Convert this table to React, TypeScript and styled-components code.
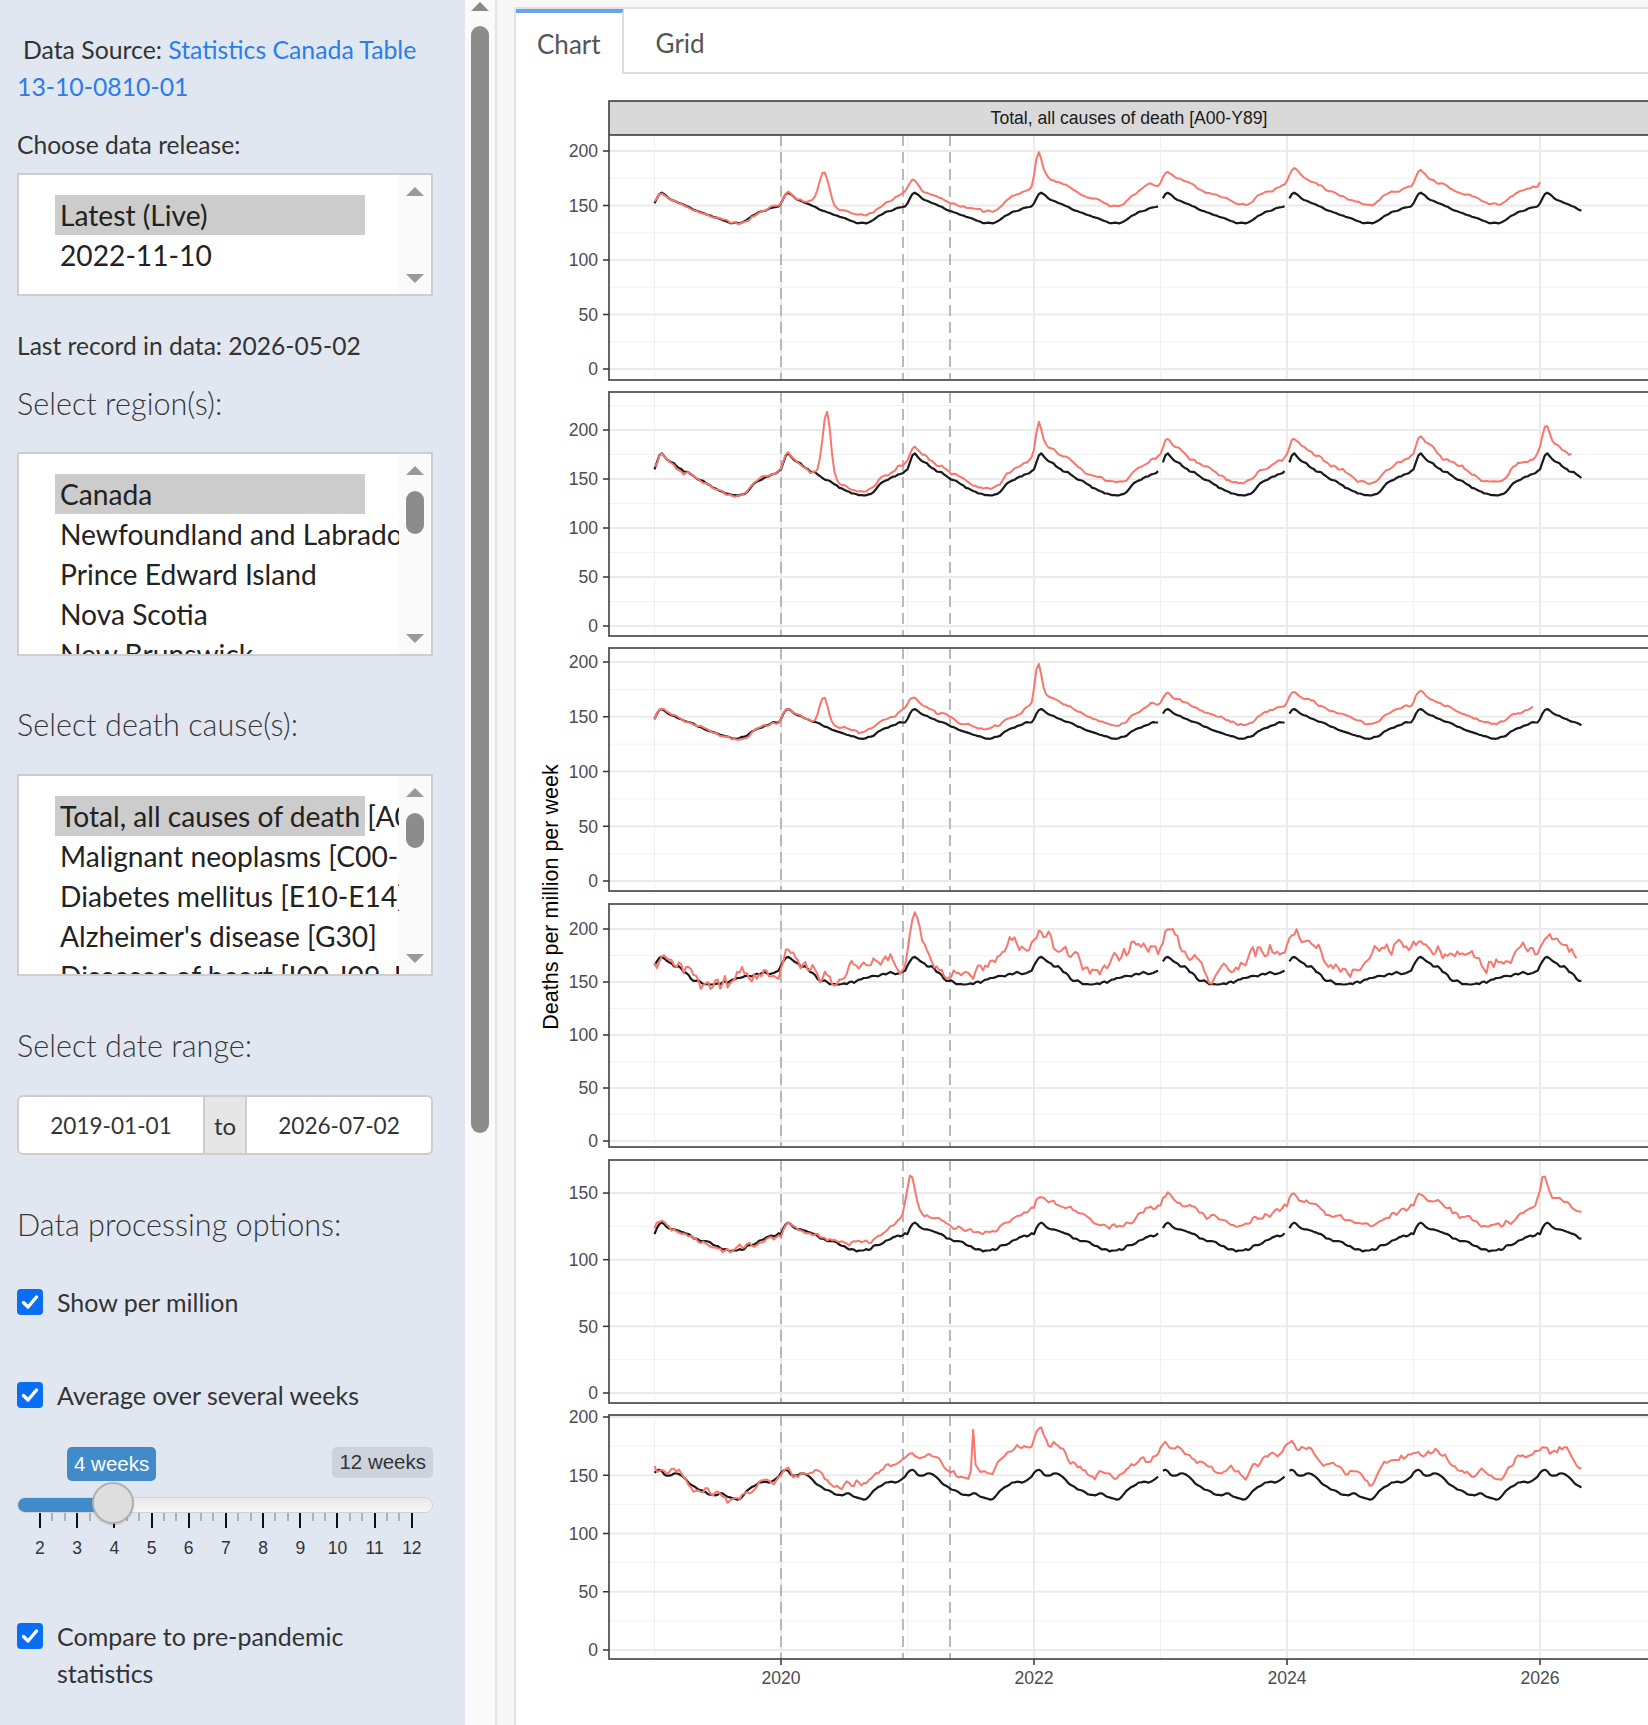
import React from 'react'
import styled, { createGlobalStyle } from 'styled-components'

const GlobalStyle = createGlobalStyle`
  html, body {
    margin: 0;
    padding: 0;
    overflow: hidden;
  }
  body {
    font-family: Lato, 'Noto Sans', sans-serif;
    color: #333;
    background: #f6f6f6;
  }
  * {
    box-sizing: border-box;
  }
`

/* ---------- layout ---------- */

const Page = styled.div`
  display: flex;
  width: 1700px;
  height: 1725px;
`

const Sidebar = styled.aside`
  flex: none;
  width: 465px;
  height: 1725px;
  padding: 31px 32px 0 17px;
  background: #e0e7f1;
  overflow: hidden;
`

const PageScroll = styled.div`
  flex: none;
  width: 32px;
  display: flex;
  flex-direction: column;
  align-items: center;
  background: #fafafa;
  border-right: 2px solid #e4e4e4;
`

const PageScrollArrow = styled.div`
  width: 0;
  height: 0;
  margin-top: 2px;
  border-left: 9px solid transparent;
  border-right: 9px solid transparent;
  border-bottom: 9px solid #8a8a8a;
`

const PageScrollThumb = styled.div`
  width: 18px;
  height: 1107px;
  margin-top: 15px;
  border-radius: 9px;
  background: #8c8c8c;
`

const Main = styled.main`
  flex: 1;
  min-width: 0;
  padding: 7px 0 0 17px;
  background: #f6f6f6;
`

const TabCard = styled.section`
  height: 100%;
  background: #fff;
  border-top: 2px solid #e2e2e2;
  border-left: 2px solid #e2e2e2;
  overflow: hidden;
`

const TabBar = styled.nav`
  display: flex;
  height: 65px;
  border-bottom: 2px solid #dedede;
`

const Tab = styled.div<{ $active?: boolean }>`
  display: flex;
  align-items: center;
  margin-top: -2px;
  height: ${p => (p.$active ? 67 : 65)}px;
  padding: 0 ${p => (p.$active ? 21 : 0)}px 0 ${p => (p.$active ? 21 : 32)}px;
  border-top: 6px solid ${p => (p.$active ? '#6ba3e8' : 'transparent')};
  border-right: ${p => (p.$active ? '2px solid #dedede' : 'none')};
  background: ${p => (p.$active ? '#fff' : 'transparent')};
  font-size: 26px;
  color: #555;
`

/* ---------- sidebar text ---------- */

const Source = styled.div`
  font-size: 24.8px;
  line-height: 37px;
`

const SourceLine = styled.div<{ $indent?: boolean }>`
  padding-left: ${p => (p.$indent ? 6 : 0)}px;
  white-space: nowrap;
`

const SourceLink = styled.a`
  color: #2b7de9;
  text-decoration: none;
`

const Label = styled.div<{ $mt: number }>`
  margin-top: ${p => p.$mt}px;
  font-size: 24.6px;
  line-height: 37px;
`

const Heading = styled.div<{ $mt: number }>`
  margin-top: ${p => p.$mt}px;
  font-size: 30.6px;
  font-weight: 300;
  line-height: 40px;
  color: #383838;
`

/* ---------- list boxes ---------- */

const ListBox = styled.div<{ $mt: number; $h: number }>`
  display: flex;
  height: ${p => p.$h}px;
  margin-top: ${p => p.$mt}px;
  border: 2px solid #cdcdcd;
  background: #fff;
`

const ListBody = styled.div`
  flex: 1;
  min-width: 0;
  overflow: hidden;
  padding: 20px 0 0 36px;
`

const Option = styled.div<{ $selected?: boolean }>`
  width: 310px;
  padding-left: 5px;
  font-size: 28.2px;
  line-height: 40px;
  white-space: nowrap;
  color: #222;
  background: ${p => (p.$selected ? '#cccccc' : 'transparent')};
`

const ListScroll = styled.div`
  flex: none;
  width: 32px;
  display: flex;
  flex-direction: column;
  align-items: center;
  background: #fafafa;
`

const Arrow = styled.div<{ $down?: boolean }>`
  width: 0;
  height: 0;
  margin: ${p => (p.$down ? '0 0 11px' : '12px 0 0')};
  border-left: 9px solid transparent;
  border-right: 9px solid transparent;
  ${p => (p.$down ? 'border-top' : 'border-bottom')}: 9px solid #999;
`

const ListThumb = styled.div<{ $h: number }>`
  width: 18px;
  height: ${p => p.$h}px;
  margin-top: 16px;
  border-radius: 9px;
  background: #8c8c8c;
`

const Spacer = styled.div`
  flex: 1;
`

/* ---------- date range ---------- */

const DateGroup = styled.div`
  display: flex;
  height: 60px;
  margin-top: 29px;
  border: 2px solid #cdcdcd;
  border-radius: 6px;
  overflow: hidden;
  background: #fff;
`

const DateField = styled.div`
  flex: 1;
  display: flex;
  align-items: center;
  justify-content: center;
  font-size: 22.6px;
  color: #333;
`

const DateAddon = styled.div`
  flex: none;
  width: 44px;
  display: flex;
  align-items: center;
  justify-content: center;
  background: #e6e6e6;
  border-left: 2px solid #cdcdcd;
  border-right: 2px solid #cdcdcd;
  font-size: 24px;
  color: #333;
`

/* ---------- checkboxes ---------- */

const CheckRow = styled.label<{ $mt: number }>`
  display: flex;
  align-items: flex-start;
  gap: 14px;
  margin-top: ${p => p.$mt}px;
  font-size: 25px;
  line-height: 37px;
`

const CheckBox = styled.span`
  flex: none;
  width: 26px;
  height: 26px;
  margin-top: 5px;
  border-radius: 4px;
  background: #0a6ef5;
  display: flex;
  align-items: center;
  justify-content: center;
`

const CheckText = styled.span`
  max-width: 330px;
`

/* ---------- slider ---------- */

const Slider = styled.div`
  position: relative;
  margin-top: 33px;
  font-family: 'Liberation Sans', Arial, sans-serif;
`

const BadgeRow = styled.div`
  position: relative;
  height: 34px;
`

const Badge = styled.span<{ $active?: boolean }>`
  position: absolute;
  top: 0;
  ${p => (p.$active ? 'left: 50px;' : 'right: 0;')}
  height: ${p => (p.$active ? 34 : 31)}px;
  padding: 0 7px;
  border-radius: 5px;
  font-size: 20.5px;
  line-height: ${p => (p.$active ? 34 : 30)}px;
  color: ${p => (p.$active ? '#fff' : '#333')};
  background: ${p => (p.$active ? '#428bca' : '#ccd3dc')};
`

const Track = styled.div`
  height: 16px;
  margin-top: 16px;
  border: 1px solid #d2d2d2;
  border-radius: 8px;
  background: linear-gradient(#e8e8e8, #f7f7f7);
  overflow: hidden;
`

const TrackFill = styled.div<{ $w: number }>`
  width: ${p => p.$w}px;
  height: 100%;
  background: #428bca;
`

const Handle = styled.div`
  position: absolute;
  left: 75px;
  top: 35px;
  width: 42px;
  height: 42px;
  border-radius: 50%;
  background: #dedede;
  border: 2px solid #b0b0b0;
  box-shadow: 0 1px 2px rgba(0, 0, 0, 0.15);
`

const TickRow = styled.div`
  display: flex;
  justify-content: space-between;
  align-items: flex-start;
  width: 374px;
  margin-left: 22px;
`

const Tick = styled.span<{ $major?: boolean }>`
  width: 2px;
  height: ${p => (p.$major ? 15 : 8)}px;
  background: ${p => (p.$major ? '#111' : '#b0b0b0')};
`

const TickLabels = styled.div`
  display: grid;
  grid-template-columns: repeat(11, 37.2px);
  margin: 10px 0 0 4.4px;
  font-size: 17.5px;
  line-height: 20px;
  color: #333;
  text-align: center;
`

/* ---------- chart ---------- */

const ChartSvg = styled.svg`
  display: block;
  font-family: 'Liberation Sans', Arial, sans-serif;
`

type Knot = [number, number]
type Bump = [number, number, number]

interface PanelSpec {
  top: number
  bottom: number
  zero: number
  ppu: number
  ticks: number[]
  level: number
  amp: number
  shape: Knot[]
  blackNoise: number
  redNoise: number
  base: Knot[]
  bumps: Bump[]
  redEnd: number
  seed: number
}

const interp = (knots: Knot[], x: number) => {
  if (x <= knots[0][0]) return knots[0][1]
  for (let i = 1; i < knots.length; i++) {
    if (x <= knots[i][0]) {
      const [x0, y0] = knots[i - 1]
      const [x1, y1] = knots[i]
      return y0 + ((y1 - y0) * (x - x0)) / (x1 - x0)
    }
  }
  return knots[knots.length - 1][1]
}

const makeRng = (seed: number) => () => {
  seed = (seed + 0x6d2b79f5) | 0
  let t = Math.imul(seed ^ (seed >>> 15), 1 | seed)
  t = (t + Math.imul(t ^ (t >>> 7), 61 | t)) ^ t
  return ((t ^ (t >>> 14)) >>> 0) / 4294967296
}

const smooth = (a: number[], w: number) =>
  a.map((_, i) => {
    let s = 0
    let c = 0
    for (let j = i - w + 1; j <= i; j++) {
      if (j >= 0) {
        s += a[j]
        c++
      }
    }
    return s / c
  })

// centered, wrapping average for one seasonal year
const smoothCycle = (a: number[], half: number) =>
  a.map((_, i) => {
    let s = 0
    for (let j = -half; j <= half; j++) s += a[(i + j + a.length) % a.length]
    return s / (2 * half + 1)
  })

const SHAPE: Knot[] = [
  [0, 0], [0.04, 0.09], [0.12, 0.04], [0.3, -0.02], [0.5, -0.08],
  [0.62, -0.11], [0.7, -0.105], [0.78, -0.06], [0.88, -0.025], [1, 0],
]

const SHAPE_LATE: Knot[] = [
  [0, 0], [0.04, 0.085], [0.1, 0.04], [0.2, 0.01], [0.3, -0.06], [0.4, -0.085],
  [0.5, -0.08], [0.6, -0.065], [0.75, -0.035], [0.9, -0.02], [1, 0],
]

const SHAPE_DOUBLE: Knot[] = [
  [0, 0], [0.03, 0.047], [0.1, -0.013], [0.18, 0.02], [0.3, -0.06], [0.45, -0.113],
  [0.5, -0.11], [0.55, -0.107], [0.65, -0.147], [0.8, -0.053], [0.95, -0.027], [1, 0],
]

const T200 = [0, 50, 100, 150, 200]

const PANELS: PanelSpec[] = [
  {
    top: 135, bottom: 380, zero: 369, ppu: 1.09, ticks: T200,
    level: 150, amp: 1, shape: SHAPE, blackNoise: 0.8, redNoise: 1.2, redEnd: 2026.0, seed: 11,
    base: [[2020.15, 0], [2020.45, 0.05], [2020.8, 0.06], [2021.3, 0.05], [2021.6, 0.08], [2022.1, 0.12], [2023.5, 0.13], [2026.5, 0.13]],
    bumps: [[2020.34, 0.055, 0.22], [2021.0, 0.07, 0.04], [2022.03, 0.035, 0.13], [2022.9, 0.07, 0.03]],
  },
  {
    top: 392, bottom: 636, zero: 626, ppu: 0.98, ticks: T200,
    level: 158, amp: 1.5, shape: SHAPE, blackNoise: 1.5, redNoise: 2, redEnd: 2026.25, seed: 23,
    base: [[2020.2, 0], [2020.5, 0.04], [2021.0, 0.03], [2021.5, 0.05], [2022.1, 0.09], [2026.5, 0.1]],
    bumps: [[2020.36, 0.045, 0.45], [2020.95, 0.07, 0.03], [2022.03, 0.03, 0.12], [2026.03, 0.045, 0.06]],
  },
  {
    top: 648, bottom: 891, zero: 881, ppu: 1.095, ticks: T200,
    level: 146, amp: 1, shape: SHAPE, blackNoise: 1, redNoise: 1.5, redEnd: 2025.95, seed: 37,
    base: [[2020.2, 0], [2020.5, 0.05], [2021.0, 0.05], [2021.5, 0.05], [2022.1, 0.1], [2026.5, 0.1]],
    bumps: [[2020.34, 0.045, 0.18], [2021.0, 0.07, 0.04], [2022.03, 0.035, 0.18], [2022.92, 0.07, 0.03]],
  },
  {
    top: 904, bottom: 1147, zero: 1141, ppu: 1.06, ticks: T200,
    level: 162, amp: 1, shape: SHAPE_LATE, blackNoise: 2.2, redNoise: 9, redEnd: 2026.3, seed: 41,
    base: [[2020.1, 0], [2020.4, 0.03], [2020.9, 0.08], [2021.5, 0.07], [2022.0, 0.12], [2026.5, 0.11]],
    bumps: [[2020.05, 0.03, 0.04], [2021.05, 0.05, 0.14], [2021.8, 0.05, 0.1], [2022.12, 0.04, 0.08], [2022.93, 0.05, 0.06]],
  },
  {
    top: 1160, bottom: 1403, zero: 1393, ppu: 1.333, ticks: [0, 50, 100, 150],
    level: 119, amp: 0.95, shape: SHAPE, blackNoise: 1.5, redNoise: 2.2, redEnd: 2026.33, seed: 53,
    base: [[2020.2, 0], [2020.5, 0.04], [2020.8, 0.08], [2021.3, 0.09], [2022.0, 0.17], [2026.5, 0.17]],
    bumps: [[2021.02, 0.045, 0.22], [2026.02, 0.035, 0.14]],
  },
  {
    top: 1415, bottom: 1659, zero: 1650, ppu: 1.165, ticks: T200,
    level: 150, amp: 1, shape: SHAPE_DOUBLE, blackNoise: 1.2, redNoise: 4, redEnd: 2026.33, seed: 67,
    base: [[2020.15, 0], [2020.35, 0.06], [2020.9, 0.12], [2021.3, 0.1], [2021.9, 0.2], [2022.5, 0.14], [2026.5, 0.13]],
    bumps: [[2020.3, 0.04, 0.05], [2021.52, 0.012, 0.25], [2022.05, 0.05, 0.06]],
  },
]

const STEP = 1 / 52
const WEEKS = Math.round((2026.33 - 2019) / STEP)
const PLOT_LEFT = 609
const PLOT_RIGHT = 1662
const xAt = (t: number) => 781 + (t - 2020) * 126.5

const toPath = (pts: Knot[], spec: PanelSpec) =>
  pts
    .map((p, i) => `${i ? 'L' : 'M'}${xAt(p[0]).toFixed(1)},${(spec.zero - p[1] * spec.ppu).toFixed(1)}`)
    .join('')

const buildSeries = (spec: PanelSpec) => {
  const rand = makeRng(spec.seed)
  const white = (n: number) => Array.from({ length: n }, () => rand() * 2 - 1)
  const bn = smooth(white(52), 2)
  const slow = smooth(white(WEEKS + 1), 6)
  const fast = smooth(white(WEEKS + 1), 2)
  const season = smoothCycle(
    Array.from({ length: 52 }, (_, w) => spec.level * (1 + spec.amp * interp(spec.shape, w / 52))),
    1,
  )
  const black: Knot[][] = [[], [], []]
  const red: Knot[] = []
  for (let k = 0; k <= WEEKS; k++) {
    const t = 2019 + k * STEP
    const woy = k % 52
    const b = season[woy] + bn[woy] * spec.blackNoise
    if (k < 208) black[0].push([t, b])
    else if (k > 208 && k < 260) black[1].push([t, b])
    else if (k > 260) black[2].push([t, b])
    if (t <= spec.redEnd) {
      const ex = interp(spec.base, t) + spec.bumps.reduce((s, [c, w, h]) => s + h * Math.exp(-(((t - c) / w) ** 2)), 0)
      red.push([t, b * (1 + ex) + slow[k] * spec.redNoise * 2.5 + fast[k] * spec.redNoise * 0.6])
    }
  }
  return {
    black: black.map(seg => toPath(seg, spec)),
    red: toPath(red, spec),
  }
}

const SERIES = PANELS.map(buildSeries)
const MAJOR_YEARS = [2020, 2022, 2024, 2026]
const MINOR_YEARS = [2019, 2021, 2023, 2025]
const DASHED = [781, 903, 950]

const Panel = ({ spec, index }: { spec: PanelSpec; index: number }) => {
  const inside = (v: number) => {
    const y = spec.zero - v * spec.ppu
    return y > spec.top + 1 && y < spec.bottom - 1
  }
  const minor = [25, 75, 125, 175, 225].filter(inside)
  const major = spec.ticks.filter(inside)
  const h = spec.bottom - spec.top
  const series = SERIES[index]
  return (
    <g>
      <rect x={PLOT_LEFT} y={spec.top} width={PLOT_RIGHT - PLOT_LEFT} height={h} fill="#fff" />
      {minor.map(v => (
        <line key={`n${v}`} x1={PLOT_LEFT} x2={PLOT_RIGHT} y1={spec.zero - v * spec.ppu} y2={spec.zero - v * spec.ppu} stroke="#f2f2f2" strokeWidth={1} />
      ))}
      {MINOR_YEARS.map(y => (
        <line key={`vy${y}`} x1={xAt(y)} x2={xAt(y)} y1={spec.top} y2={spec.bottom} stroke="#f0f0f0" strokeWidth={1} />
      ))}
      {major.map(v => (
        <line key={`m${v}`} x1={PLOT_LEFT} x2={PLOT_RIGHT} y1={spec.zero - v * spec.ppu} y2={spec.zero - v * spec.ppu} stroke="#ebebeb" strokeWidth={2} />
      ))}
      {MAJOR_YEARS.map(y => (
        <line key={`vm${y}`} x1={xAt(y)} x2={xAt(y)} y1={spec.top} y2={spec.bottom} stroke="#ebebeb" strokeWidth={2} />
      ))}
      {DASHED.map(x => (
        <line key={`d${x}`} x1={x} x2={x} y1={spec.top} y2={spec.bottom} stroke="#b3b3b3" strokeWidth={1.8} strokeDasharray="11 6" />
      ))}
      {series.black.map((d, i) => (
        <path key={`b${i}`} d={d} fill="none" stroke="#1a1a1a" strokeWidth={2.2} strokeLinejoin="round" />
      ))}
      <path d={series.red} fill="none" stroke="#f8766d" strokeWidth={2} strokeLinejoin="round" />
      <rect x={PLOT_LEFT} y={spec.top} width={PLOT_RIGHT - PLOT_LEFT} height={h} fill="none" stroke="#555" strokeWidth={1.8} />
      {spec.ticks.map(v => {
        const y = spec.zero - v * spec.ppu
        return (
          <g key={`t${v}`}>
            <line x1={603} x2={PLOT_LEFT} y1={y} y2={y} stroke="#333" strokeWidth={1.5} />
            <text x={598} y={y} dy="0.36em" textAnchor="end" fontSize={17.6} fill="#4d4d4d">
              {v}
            </text>
          </g>
        )
      })}
    </g>
  )
}

const Chart = () => (
  <ChartSvg width={1200} height={1651} viewBox="516 74 1200 1651">
    <rect x={PLOT_LEFT} y={101} width={PLOT_RIGHT - PLOT_LEFT} height={34} fill="#d9d9d9" stroke="#333" strokeWidth={1.5} />
    <text x={1129} y={118} dy="0.36em" textAnchor="middle" fontSize={17.6} fill="#1a1a1a">
      Total, all causes of death [A00-Y89]
    </text>
    {PANELS.map((spec, i) => (
      <Panel key={i} spec={spec} index={i} />
    ))}
    {MAJOR_YEARS.map(y => (
      <g key={y}>
        <line x1={xAt(y)} x2={xAt(y)} y1={1659} y2={1665} stroke="#333" strokeWidth={1.5} />
        <text x={xAt(y)} y={1678} dy="0.36em" textAnchor="middle" fontSize={17.6} fill="#4d4d4d">
          {y}
        </text>
      </g>
    ))}
    <text x={550} y={897} dy="0.36em" textAnchor="middle" fontSize={21.5} fill="#000" transform="rotate(-90 550 897)">
      Deaths per million per week
    </text>
  </ChartSvg>
)

/* ---------- pieces ---------- */

const CheckMark = () => (
  <svg width="20" height="20" viewBox="0 0 20 20">
    <path d="M3.5 10.5 L8 15 L16.5 5" fill="none" stroke="#fff" strokeWidth="3.4" strokeLinecap="round" strokeLinejoin="round" />
  </svg>
)

const Check = ({ mt, children }: { mt: number; children: React.ReactNode }) => (
  <CheckRow $mt={mt}>
    <CheckBox>
      <CheckMark />
    </CheckBox>
    <CheckText>{children}</CheckText>
  </CheckRow>
)

const List = ({
  mt,
  h,
  items,
  thumb,
}: {
  mt: number
  h: number
  items: string[]
  thumb?: number
}) => (
  <ListBox $mt={mt} $h={h}>
    <ListBody>
      {items.map((item, i) => (
        <Option key={item} $selected={i === 0}>
          {item}
        </Option>
      ))}
    </ListBody>
    <ListScroll>
      <Arrow />
      {thumb ? <ListThumb $h={thumb} /> : null}
      <Spacer />
      <Arrow $down />
    </ListScroll>
  </ListBox>
)

const WEEK_LABELS = [2, 3, 4, 5, 6, 7, 8, 9, 10, 11, 12]

const App = () => (
  <>
    <GlobalStyle />
    <Page>
      <Sidebar>
        <Source>
          <SourceLine $indent>
            Data Source: <SourceLink href="#">Statistics Canada Table</SourceLink>
          </SourceLine>
          <SourceLine>
            <SourceLink href="#">13-10-0810-01</SourceLink>
          </SourceLine>
        </Source>
        <Label $mt={21}>Choose data release:</Label>
        <List mt={10} h={123} items={['Latest (Live)', '2022-11-10']} />
        <Label $mt={31}>Last record in data: 2026-05-02</Label>
        <Heading $mt={20}>Select region(s):</Heading>
        <List
          mt={28}
          h={204}
          thumb={43}
          items={['Canada', 'Newfoundland and Labrador', 'Prince Edward Island', 'Nova Scotia', 'New Brunswick']}
        />
        <Heading $mt={49}>Select death cause(s):</Heading>
        <List
          mt={29}
          h={202}
          thumb={35}
          items={[
            'Total, all causes of death [A00-Y89]',
            'Malignant neoplasms [C00-C97]',
            'Diabetes mellitus [E10-E14]',
            "Alzheimer's disease [G30]",
            'Diseases of heart [I00-I09, I11, I13, I20-I51]',
          ]}
        />
        <Heading $mt={50}>Select date range:</Heading>
        <DateGroup>
          <DateField>2019-01-01</DateField>
          <DateAddon>to</DateAddon>
          <DateField>2026-07-02</DateField>
        </DateGroup>
        <Heading $mt={50}>Data processing options:</Heading>
        <Check mt={39}>Show per million</Check>
        <Check mt={56}>Average over several weeks</Check>
        <Slider>
          <BadgeRow>
            <Badge $active>4 weeks</Badge>
            <Badge>12 weeks</Badge>
          </BadgeRow>
          <Track>
            <TrackFill $w={97} />
          </Track>
          <Handle />
          <TickRow>
            {Array.from({ length: 31 }, (_, i) => (
              <Tick key={i} $major={i % 3 === 0} />
            ))}
          </TickRow>
          <TickLabels>
            {WEEK_LABELS.map(w => (
              <span key={w}>{w}</span>
            ))}
          </TickLabels>
        </Slider>
        <Check mt={60}>Compare to pre-pandemic statistics</Check>
      </Sidebar>
      <PageScroll>
        <PageScrollArrow />
        <PageScrollThumb />
      </PageScroll>
      <Main>
        <TabCard>
          <TabBar>
            <Tab $active>Chart</Tab>
            <Tab>Grid</Tab>
          </TabBar>
          <Chart />
        </TabCard>
      </Main>
    </Page>
  </>
)

export default App
